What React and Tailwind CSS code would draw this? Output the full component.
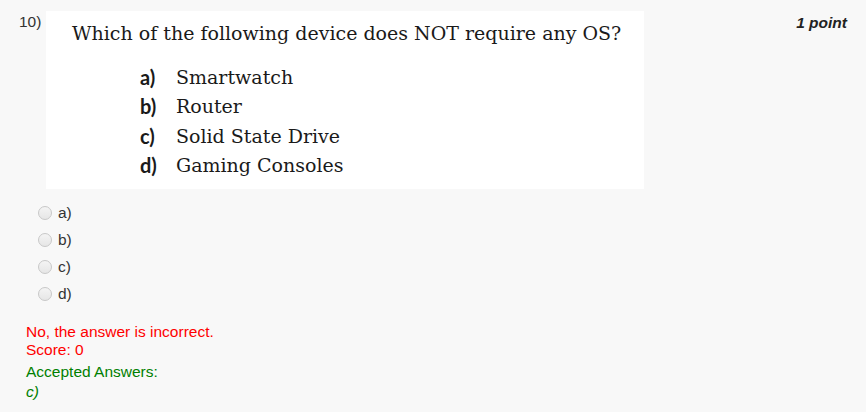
import { useState } from "react";

const options = ["a)", "b)", "c)", "d)"];

const imageOptions = [
  { label: "a)", text: "Smartwatch" },
  { label: "b)", text: "Router" },
  { label: "c)", text: "Solid State Drive" },
  { label: "d)", text: "Gaming Consoles" },
];

export default function App() {
  const [picked, setPicked] = useState(null);

  return (
    <div className="w-[866px] h-[412px] bg-[#f8f8f8] text-[#333] font-['Liberation_Sans',Arial,sans-serif] text-[15.5px] overflow-hidden">
      <div className="flex justify-between pt-[11px] pr-[19px]">
        <div className="flex">
          <span className="w-[46px] pl-[19px] pt-[2px] leading-[18px]">10)</span>
          {/* imagen de la pregunta */}
          <div className="w-[598px] h-[178px] bg-white pl-[26px] pt-[10px] font-['DejaVu_Serif',serif] text-[#1a1a1a]">
            <p className="text-[19px] leading-[24px]">
              Which of the following device does NOT require any OS?
            </p>
            <ul className="mt-[17px] ml-[68px] text-[19px]">
              {imageOptions.map((o) => (
                <li key={o.label} className="flex h-[29.5px] items-center">
                  <span className="w-[36px] font-['Lato',sans-serif] font-bold text-[20px]">{o.label}</span>
                  <span>{o.text}</span>
                </li>
              ))}
            </ul>
          </div>
        </div>
        <span className="italic font-bold pt-[3px] leading-[18px] text-[#222]">1 point</span>
      </div>

      {/* opciones */}
      <div className="mt-[15px] pl-[38px] flex flex-col gap-[9px]">
        {options.map((o) => (
          <label key={o} className="flex items-center h-[18px] cursor-pointer">
            <span
              onClick={() => setPicked(o)}
              className="w-[14px] h-[14px] rounded-full border border-[#c8c8c8] bg-gradient-to-b from-[#f4f4f4] to-[#e6e6e6] mr-[6px]"
            />
            <span className="leading-[18px]">{o}</span>
          </label>
        ))}
      </div>

      {/* retroalimentacion */}
      <div className="mt-[20px] pl-[26px]">
        <p className="text-[#ff0000] leading-[18px]">No, the answer is incorrect.</p>
        <p className="text-[#ff0000] leading-[18px]">Score: 0</p>
        <p className="text-[#008000] leading-[18px] mt-[4px]">Accepted Answers:</p>
        <p className="text-[#008000] italic leading-[18px] mt-[2px]">c)</p>
      </div>
    </div>
  );
}
